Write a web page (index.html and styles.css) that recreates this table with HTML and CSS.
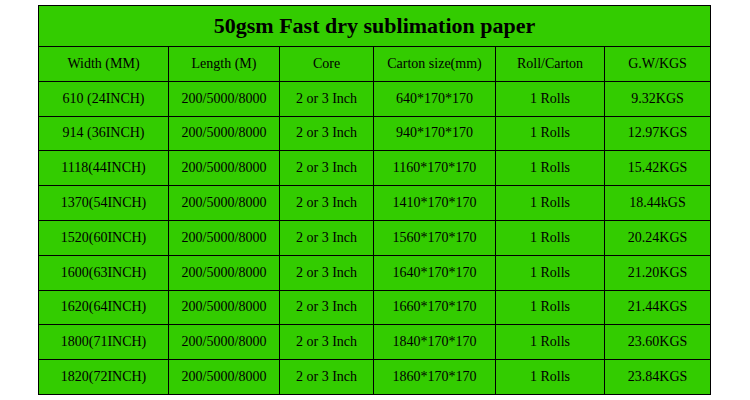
FILE: index.html
```html
<!DOCTYPE html>
<html>
<head>
<meta charset="utf-8">
<link rel="stylesheet" href="styles.css">
</head>
<body>
<div class="wrap">
<table class="spec">
<colgroup>
<col class="c1"><col class="c2"><col class="c3"><col class="c4"><col class="c5"><col class="c6">
</colgroup>
<tr class="title-row"><td colspan="6" class="title">50gsm Fast dry sublimation paper</td></tr>
<tr class="row"><td>Width (MM)</td><td>Length (M)</td><td>Core</td><td>Carton size(mm)</td><td>Roll/Carton</td><td>G.W/KGS</td></tr>
<tr class="row"><td>610 (24INCH)</td><td>200/5000/8000</td><td>2 or 3 Inch</td><td>640*170*170</td><td>1 Rolls</td><td>9.32KGS</td></tr>
<tr class="row"><td>914 (36INCH)</td><td>200/5000/8000</td><td>2 or 3 Inch</td><td>940*170*170</td><td>1 Rolls</td><td>12.97KGS</td></tr>
<tr class="row"><td>1118(44INCH)</td><td>200/5000/8000</td><td>2 or 3 Inch</td><td>1160*170*170</td><td>1 Rolls</td><td>15.42KGS</td></tr>
<tr class="row"><td>1370(54INCH)</td><td>200/5000/8000</td><td>2 or 3 Inch</td><td>1410*170*170</td><td>1 Rolls</td><td>18.44kGS</td></tr>
<tr class="row"><td>1520(60INCH)</td><td>200/5000/8000</td><td>2 or 3 Inch</td><td>1560*170*170</td><td>1 Rolls</td><td>20.24KGS</td></tr>
<tr class="row"><td>1600(63INCH)</td><td>200/5000/8000</td><td>2 or 3 Inch</td><td>1640*170*170</td><td>1 Rolls</td><td>21.20KGS</td></tr>
<tr class="row"><td>1620(64INCH)</td><td>200/5000/8000</td><td>2 or 3 Inch</td><td>1660*170*170</td><td>1 Rolls</td><td>21.44KGS</td></tr>
<tr class="row"><td>1800(71INCH)</td><td>200/5000/8000</td><td>2 or 3 Inch</td><td>1840*170*170</td><td>1 Rolls</td><td>23.60KGS</td></tr>
<tr class="row"><td>1820(72INCH)</td><td>200/5000/8000</td><td>2 or 3 Inch</td><td>1860*170*170</td><td>1 Rolls</td><td>23.84KGS</td></tr>
</table>
</div>
</body>
</html>
```
FILE: styles.css
```css
html, body {
  margin: 0;
  padding: 0;
  background: #ffffff;
}
.wrap {
  padding: 5px 0 0 38px;
}
.spec {
  border-collapse: collapse;
  table-layout: fixed;
  width: 672px;
  background: #33cc00;
  font-family: "Liberation Serif", "Times New Roman", serif;
  font-size: 14px;
  color: #000;
}
.c1 { width: 130px; }
.c2 { width: 111px; }
.c3 { width: 94px; }
.c4 { width: 122px; }
.c5 { width: 109px; }
.c6 { width: 106px; }
.spec td {
  border: 1px solid #000;
  text-align: center;
  vertical-align: middle;
  padding: 0;
}
.title-row td {
  height: 40px;
  font-size: 22px;
  font-weight: bold;
}
.row td {
  height: 33.8px;
}
```
